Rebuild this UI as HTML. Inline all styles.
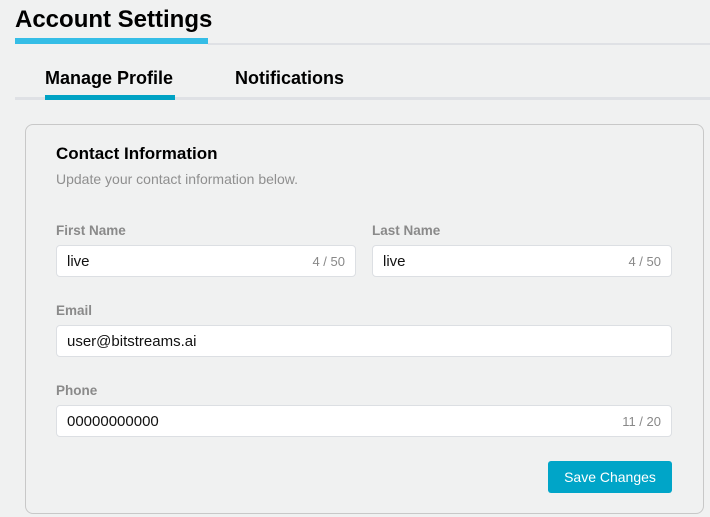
<!DOCTYPE html>
<html><head><style>
*{margin:0;padding:0;box-sizing:border-box}
body{width:710px;height:517px;background:#f0f1f1;font-family:"Liberation Sans",sans-serif;position:relative;overflow:hidden}
.a{position:absolute}
.inp{position:absolute;background:#fff;border:1px solid #dcdfe3;border-radius:4px;height:32px;font-size:15px;color:#111;padding:7px 0 0 10px}
.cnt{position:absolute;right:10px;top:8px;font-size:13px;color:#888}
.lbl{position:absolute;font-size:13.5px;font-weight:bold;color:#8a8a8a}
</style></head><body>
<div class="a" style="left:15px;top:6px;font-size:24px;font-weight:bold;color:#000">Account Settings</div>
<div class="a" style="left:15px;top:38px;width:193px;height:6px;background:#35bde6"></div>
<div class="a" style="left:208px;top:43px;width:502px;height:2px;background:#dfe1e5"></div>
<div class="a" style="left:45px;top:68px;font-size:18px;font-weight:bold;color:#000">Manage Profile</div>
<div class="a" style="left:235px;top:68px;font-size:18px;font-weight:bold;color:#000">Notifications</div>
<div class="a" style="left:15px;top:97px;width:695px;height:3px;background:#dfe1e5"></div>
<div class="a" style="left:45px;top:95px;width:130px;height:5px;background:#00a2c4"></div>
<div class="a" style="left:25px;top:124px;width:679px;height:390px;border:1px solid #c8c8c8;border-radius:8px"></div>
<div class="a" style="left:56px;top:144px;font-size:17px;font-weight:bold;color:#000">Contact Information</div>
<div class="a" style="left:56px;top:171px;font-size:14px;color:#8f8f8f">Update your contact information below.</div>
<div class="lbl" style="left:56px;top:223px">First Name</div>
<div class="inp" style="left:56px;top:245px;width:300px">live<span class="cnt">4 / 50</span></div>
<div class="lbl" style="left:372px;top:223px">Last Name</div>
<div class="inp" style="left:372px;top:245px;width:300px">live<span class="cnt">4 / 50</span></div>
<div class="lbl" style="left:56px;top:303px">Email</div>
<div class="inp" style="left:56px;top:325px;width:616px">user@bitstreams.ai</div>
<div class="lbl" style="left:56px;top:383px">Phone</div>
<div class="inp" style="left:56px;top:405px;width:616px">00000000000<span class="cnt">11 / 20</span></div>
<div class="a" style="left:548px;top:461px;width:124px;height:32px;background:#00a5c8;border-radius:3px;color:#fff;font-size:14px;text-align:center;line-height:32px">Save Changes</div>
</body></html>
